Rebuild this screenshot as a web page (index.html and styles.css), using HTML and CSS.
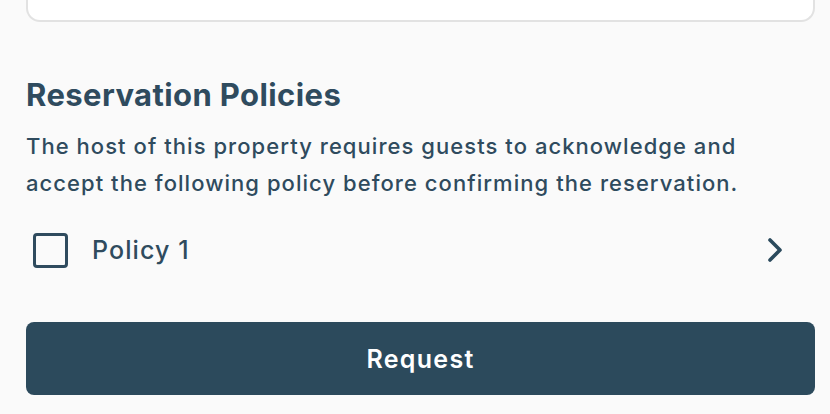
FILE: index.html
```html
<!DOCTYPE html>
<html lang="en">
<head>
    <meta charset="UTF-8">
    <meta name="viewport" content="width=device-width, initial-scale=1.0">
    <title>Reservation Policies</title>
    <link rel="stylesheet" href="styles.css">
</head>
<body>
    <div class="page">
        <div class="card-end"></div>

        <section class="policies">
            <h2>Reservation Policies</h2>
            <p>The host of this property requires guests to acknowledge and accept the following policy before confirming the reservation.</p>

            <div class="policy-row">
                <span class="checkbox"></span>
                <span class="policy-name">Policy 1</span>
                <svg class="chevron" width="16" height="26" viewBox="0 0 16 26" fill="none" stroke="currentColor" stroke-width="3.6" stroke-linecap="round" stroke-linejoin="round">
                    <path d="M3 3l10 10-10 10"/>
                </svg>
            </div>
        </section>

        <button class="request">Request</button>
    </div>
</body>
</html>
```

FILE: styles.css
```css
body {
    margin: 0;
    background: #fafafa;
    font-family: 'Inter', 'Roboto', sans-serif;
    color: #2f4b5e;
}

.page {
    padding: 0 15px 0 26px;
}

.card-end {
    height: 20px;
    background: #fff;
    border: 2px solid #e2e2e2;
    border-top: none;
    border-radius: 0 0 14px 14px;
}

.policies {
    padding-top: 56px;
}

.policies h2 {
    margin: 0;
    font-size: 31px;
    line-height: 34px;
    font-weight: 700;
    letter-spacing: 0.4px;
}

.policies p {
    margin: 16px 0 0;
    padding-right: 50px;
    font-size: 22px;
    line-height: 37px;
    font-weight: 500;
    letter-spacing: 1.05px;
}

.policy-row {
    display: flex;
    align-items: center;
    margin-top: 28px;
    padding: 0 32px 0 7px;
    height: 40px;
}

.checkbox {
    width: 29px;
    height: 29px;
    border: 3px solid #2f4b5e;
    border-radius: 4px;
}

.policy-name {
    margin-left: 24px;
    font-size: 25px;
    font-weight: 500;
    letter-spacing: 1.1px;
    flex: 1;
}

.chevron {
    color: #2b4a5d;
}

.request {
    display: block;
    width: 100%;
    height: 73px;
    margin-top: 52px;
    border: none;
    border-radius: 8px;
    background: #2c4a5c;
    color: #fff;
    font-family: inherit;
    font-size: 25px;
    font-weight: 600;
    letter-spacing: 1.3px;
    cursor: pointer;
}
```
